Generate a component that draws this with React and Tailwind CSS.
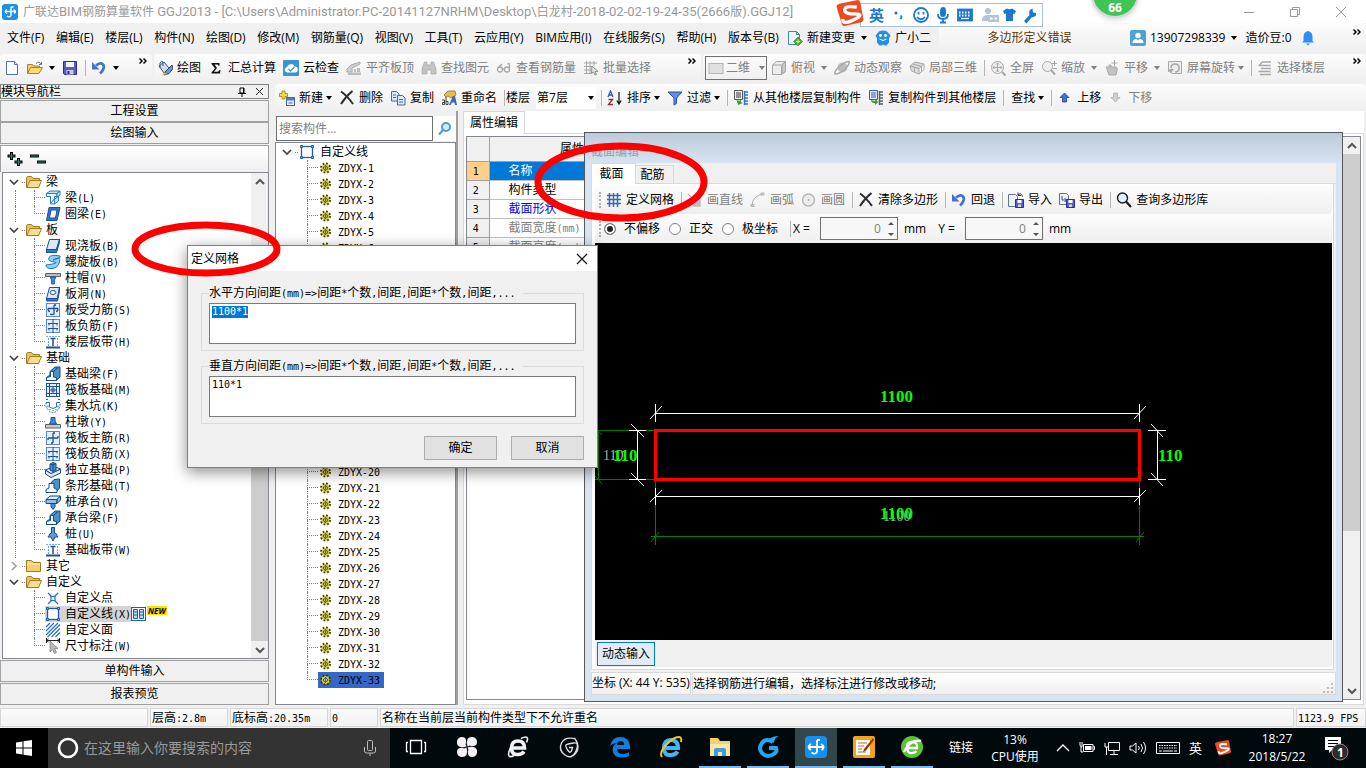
import React, { useEffect, useRef } from "react";

const BLUE = "#1d4f9e";

/* 16x16 drawings, keyed by name */
const ART = {
  app: (
    <>
      <rect width="16" height="16" rx="3" fill="#1e90e8" />
      <path d="M9 3v8.500q-1.500 2.500-4 .5M3 7.500h10M5 5.500q-3.500 2 0 4M11.500 5.500q3.500 2 .5 4M9 3h2.500" fill="none" stroke="#fff" strokeWidth="1.400" />
    </>
  ),
  newDoc: (
    <>
      <path d="M2.500 1.500h8l3 3v10h-11z" fill="#fdfeff" stroke="#5474a0" />
      <path d="M10.500 1.500v3h3" fill="#dbe6f5" stroke="#5474a0" />
    </>
  ),
  open: (
    <>
      <path d="M.5 13.500v-9h5l1 1.500h6v2" fill="#f3cf6e" stroke="#a9802c" />
      <path d="M.5 13.500l3-6h12l-3.500 6z" fill="#fbd976" stroke="#a9802c" />
      <path d="M9 3.500q3-3 5 .5m.5-2v2.500h-2.500" fill="none" stroke="#5d7594" />
    </>
  ),
  save: (
    <>
      <path d="M1.500 1.500h13v13h-12l-1-1z" fill="#5a5cc4" stroke="#2d2f80" />
      <path d="M4 2h8v5h-8z" fill="#f3f5ff" />
      <path d="M4.500 10h7v4.500h-7z" fill="#c7cbe8" />
      <path d="M5.500 11h2v3h-2z" fill="#2d2f80" />
    </>
  ),
  undo: (
    <>
      <path d="M5 5.500q5-4 7.500-.5 1.500 4-3.500 8.500" fill="none" stroke="#4373cc" strokeWidth="2.800" />
      <path d="M1 2v7.500h7.500z" fill="#4373cc" />
    </>
  ),
  paint: (
    <>
      <path d="M2 6l5-4 5 6-5 5z" fill="#cfdcec" stroke="#3d5878" />
      <path d="M3 8V3q1.500-3 3-1v4" fill="none" stroke="#3d5878" />
      <path d="M15 5l-6 6-2 4 5-1.500 4-5z" fill="#6a95d0" stroke="#26466f" />
      <path d="M7 12l-1.500 3.500L10 14z" fill="#e0b13a" />
    </>
  ),
  sigma: <path d="M3.500 3h8v2.700h-1q0-1.200-1.800-1.200H6.500L9 8l-3 3.700h3.300q1.700 0 2.200-1.700h1L12 13.500H3.500v-1L7 8.300 3.500 4z" fill="#111" />,
  cloud: (
    <>
      <rect width="16" height="16" rx="1" fill="#3a93d2" />
      <path d="M4 12.500a2.800 2.800 0 0 1 0-5.500 4 4 0 0 1 7.500-.5 3 3 0 0 1 .5 6z" fill="#fff" />
      <path d="M5.500 9l2 2 4-4" fill="none" stroke="#3a93d2" strokeWidth="1.300" />
    </>
  ),
  align: (
    <>
      <path d="M1 9l4-4 9-3v2L6 8v4H1z" fill="#d2d2d2" stroke="#a8a8a8" />
      <path d="M2 12.500h13v2.500H2zM8 9h2v3H8zM11 8h3v4h-3z" fill="#bcbcbc" />
    </>
  ),
  binoc: <path d="M3.500 2h2.500v3h4V2h2.500l2.500 7v5h-5v-4H6v4H1V9z" fill="#c4c4c4" stroke="#a0a0a0" strokeWidth=".6" />,
  glasses: (
    <g fill="none" stroke="#a8a8a8" strokeWidth="1.300">
      <circle cx="4" cy="9.500" r="2.500" />
      <circle cx="11" cy="9.500" r="2.500" />
      <path d="M6.500 9h2M2 8l4-4M13.500 9V4l-2-.5" />
    </g>
  ),
  batch: (
    <>
      <path d="M1 3h13M1 6.500h9M1 10h7M1 13.500h7M3.500 1v13M7 1v13M11 1v5" stroke="#a5a5a5" fill="none" />
      <path d="M9 6l6 5.500h-3l1.500 3-1.500.5-1.500-3-2 1.500z" fill="#e4e4e4" stroke="#8d8d8d" />
    </>
  ),
  flat: <rect x="1" y="3.500" width="14" height="10" fill="#e0e0e0" stroke="#b5b5b5" />,
  cube: (
    <g stroke="#a5a5a5" fill="#ececec">
      <path d="M1.500 5l4-3.500h9v10l-4 3h-9z" />
      <path d="M1.500 5h9v9.500M10.500 5l4-3.500" fill="none" />
      <path d="M11 5l3.500-3v9L11 14z" fill="#c9c9c9" />
    </g>
  ),
  orbit: (
    <>
      <ellipse cx="8.500" cy="7.500" rx="5" ry="5" fill="#bdbdbd" />
      <path d="M1 14q-1-3 5-8T15 1.500q1 2.500-4 7.500t-10 5z" fill="none" stroke="#a8a8a8" strokeWidth="1.500" />
    </>
  ),
  local3d: (
    <g fill="#dcdcdc" stroke="#a8a8a8">
      <path d="M1 6l5-4 9 2-5 4.500z" />
      <path d="M1 6l9 2.500V14L2.500 11z" />
      <path d="M15 4v5.500L10 14M5.500 7.500V12M3.500 4l9 2.300V12" fill="none" />
    </g>
  ),
  full: (
    <g fill="none" stroke="#a8a8a8">
      <circle cx="7.500" cy="7.500" r="6" fill="#efefef" />
      <path d="M7.500 3v9M3 7.500h9M6 4.500l1.500-1.500L9 4.500M6 10.500L7.500 12 9 10.500M4.500 6L3 7.500 4.500 9M10.500 6L12 7.500 10.500 9" />
      <path d="M12 12l3.500 3.500" strokeWidth="2" />
    </g>
  ),
  zoom: (
    <g fill="none" stroke="#a8a8a8">
      <circle cx="6.500" cy="6.500" r="5" fill="#efefef" />
      <path d="M10 10l4 4.500" strokeWidth="2" />
      <path d="M11 3.500h5M13.500 1v5M12 8.500h4" />
    </g>
  ),
  pan: (
    <g stroke="#a8a8a8" fill="none">
      <path d="M3 9q-2-3 1-2l1 1V5h2v2h5q2 1 1 4l-1 4H5z" fill="#c3c3c3" />
      <path d="M10.500 0v6M7.500 3h6" />
    </g>
  ),
  rotate: (
    <g fill="none" stroke="#a8a8a8">
      <path d="M1.500 12V1.500h13v12H5" fill="#ededed" />
      <path d="M4 8q0-4 4-4t4 4-4 4" strokeWidth="1.600" />
      <path d="M2 10l4-1-2 4z" fill="#a8a8a8" />
    </g>
  ),
  floors: <path d="M5 2h9M1.500 5.500h12M4 8.500h10M1.500 11.500h12M3 14.500h11M2 6l3-4" stroke="#a8a8a8" strokeWidth="1.400" fill="none" />,
  create: (
    <>
      <path d="M3 1h3v2.500h2.500v3H6V9H3V6.500H.5v-3H3z" fill="#f2d64b" stroke="#9c8014" strokeWidth=".8" />
      <rect x="7.500" y="7.500" width="8" height="8" fill="#e3edfb" stroke="#4568a6" />
      <path d="M8 8h7v2.500H8z" fill="#4f7dd0" />
      <path d="M9.500 13h4" stroke="#4568a6" />
    </>
  ),
  del: <path d="M2 1.500q6 4 12 12.500M13.500 1Q7 6 2 14" fill="none" stroke="#2c2c2c" strokeWidth="2" />,
  copy: (
    <g fill="#dbe8fb" stroke="#4568a6">
      <path d="M1.500 1.500h5l2.500 2.500v7H1.500z" />
      <path d="M7.500 5.500h5l2.500 2.500v7H7.500z" />
      <path d="M3 5h3M3 7.500h3M9 9.500h4M9 12h4" />
    </g>
  ),
  rename: (
    <>
      <path d="M3 5l4-4h7l1 4-5 3-3-2-2 1z" fill="#e4bd4c" stroke="#7d6220" strokeWidth=".7" />
      <path d="M8 15l4-9h2l2 9h-2l-.5-2.500h-2.500L9.500 15z" fill="#3a66b8" />
      <path d="M1 10h2.500v4.500H1.500v-2h2M5 7v7.500h2v-3H5" fill="none" stroke="#333" strokeWidth=".9" />
    </>
  ),
  sort: (
    <>
      <path d="M1 7l2.500-6L6 7M2 5h3" fill="none" stroke="#3357b0" strokeWidth="1.300" />
      <path d="M1.500 9.500h4l-4 5h4.500" fill="none" stroke="#a02828" strokeWidth="1.300" />
      <path d="M12 2v11M9.800 10.500L12 14l2.200-3.500" fill="none" stroke="#111" strokeWidth="1.200" />
    </>
  ),
  filter: <path d="M1 2h14l-5.500 6v5.500L7 15V8z" fill="#5c8fe6" stroke="#274f9c" />,
  copyFrom: (
    <>
      <path d="M1.500 .5h8v9h-8z" fill="#f2f2f2" stroke="#555" />
      <path d="M3 3h5M3 5h5M3 7h5" stroke="#333" />
      <path d="M12 2h3M12 5h3M12 8h3M12 11h3M12 14h3M11.500 1v14" stroke="#3b70c4" strokeWidth="1.500" />
      <path d="M5 15l4-1.500-1.500-4-1 1.500-3-1 1 3z" fill="#3a9e3a" />
    </>
  ),
  copyTo: (
    <>
      <path d="M1.500 .5h8v9h-8z" fill="#dfe9fa" stroke="#3a5ea8" />
      <path d="M3 3h5M3 5h5M3 7h5" stroke="#3a5ea8" />
      <path d="M12 2h3M12 5h3M12 8h3M12 11h3M12 14h3M11.500 1v14" stroke="#55606e" strokeWidth="1.500" />
      <path d="M3 9.500q0 4 4 3.500v2l3.500-3L7 9v2q-2 0-4-1.500z" fill="#3a9e3a" />
    </>
  ),
  up: <path d="M7.500 3l4.500 4.500H9.500v4.500h-4V7.500H3z" fill="#3f72d8" stroke="#1d439c" strokeWidth=".8" />,
  down: <path d="M7.500 12L12 7.500H9.500V3h-4v4.500H3z" fill="#cfcfcf" stroke="#b0b0b0" strokeWidth=".8" />,
  change: (
    <>
      <path d="M1.500 1.500h8l3 3v10h-11z" fill="#eef6fd" stroke="#3f86b8" />
      <path d="M9.500 1.500v3h3" fill="none" stroke="#3f86b8" />
      <path d="M11 7l4.500 4.500L11 16l-4.500-4.500z" fill="#55a82c" stroke="#2d7d12" strokeWidth=".6" />
      <path d="M11 9.500v4M9 11.500h4" stroke="#d8f5c8" />
    </>
  ),
  mascot: (
    <>
      <path d="M4 1.500q4-2 8 0l3.500 4-1.500 3v4l-2.500 3H9.500L8 14.500 6.500 15.500h-2L2 12.500v-4l-1.500-3z" fill="#2490e0" />
      <circle cx="5.500" cy="5.500" r="1.400" fill="#fff" />
      <circle cx="10.500" cy="5.500" r="1.400" fill="#fff" />
      <path d="M4.500 9q3.500 3 7 0" stroke="#fff" fill="none" />
    </>
  ),
  user: (
    <>
      <rect width="16" height="16" rx="2" fill="#4aa3d6" />
      <circle cx="8" cy="5.500" r="2.700" fill="#fff" />
      <path d="M2.500 13q0-4 4-4L8 10.500 9.500 9q4 0 4 4z" fill="#fff" />
    </>
  ),
  bell: <path d="M8 1q-4.500 1-4.500 6v4L2 12.500h12L12.500 11V7q0-5-4.500-6zM6 13.500h4L8 15.500z" fill="#2f8df5" />,
  grid: <path d="M3.500 1v14M7.500 1v14M11.500 1v14M1 3.500h14M1 7.500h14M1 11.500h14" stroke="#3968b8" strokeWidth="1.500" fill="none" />,
  line: <path d="M1 2l10 10M13 6v8H6z" stroke="#b0b0b0" strokeWidth="1.200" fill="#c8c8c8" />,
  arc: <path d="M2 14Q2 4 13 2M1 12.500h3v2H1zM11 1h3v2h-3z" stroke="#b0b0b0" fill="none" />,
  circle: (
    <>
      <circle cx="7.500" cy="8" r="6" fill="#ececec" stroke="#b5b5b5" strokeWidth="1.400" />
      <circle cx="7.500" cy="8" r="1" fill="#aaa" />
    </>
  ),
  importIcon: (
    <>
      <path d="M.5 2.500h7l2 2v10h-9z" fill="#edf2fb" stroke="#5d7594" />
      <path d="M7.500 7.500h8v8h-8z" fill="#5a5cc4" stroke="#2d2f80" />
      <path d="M9.500 8h4v3h-4z" fill="#fff" />
      <path d="M10 12.500h3V15h-3z" fill="#d5d8f0" />
      <path d="M10 3q3-3 4.500 1.500M10 .5V3.500h3" stroke="#333" fill="none" />
    </>
  ),
  exportIcon: (
    <>
      <path d="M.5 1.500h7l2 2v9h-9z" fill="#edf2fb" stroke="#5d7594" />
      <path d="M7.500 7.500h8v8h-8z" fill="#5a5cc4" stroke="#2d2f80" />
      <path d="M9.500 8h4v3h-4z" fill="#fff" />
      <path d="M10 12.500h3V15h-3z" fill="#d5d8f0" />
      <path d="M3 4v4h4M5.500 6l2 2-2 2" stroke="#2b4f96" fill="none" />
    </>
  ),
  query: (
    <>
      <circle cx="6.500" cy="6" r="5" fill="#dff1fc" stroke="#1c1c1c" strokeWidth="1.400" />
      <path d="M10 9.500l5 5.500" stroke="#1c1c1c" strokeWidth="2.200" />
    </>
  ),
  folderOpen: (
    <>
      <path d="M.5 13.500V3.500l1-1h4l1.500 2h6.500v3" fill="#e9c25b" stroke="#a07a26" />
      <path d="M.8 13.500L4 6.500h11.500L12.500 13.500z" fill="#fbdf8e" stroke="#a07a26" />
    </>
  ),
  folder: (
    <>
      <path d="M.5 13.500V2.500h5l1.500 2h7.500v9z" fill="#f3cf6e" stroke="#a07a26" />
      <path d="M1 6h13" stroke="#fff1c4" />
    </>
  ),
  beam: (
    <g stroke="#2a7fb8" fill="#bfe3f7">
      <path d="M1.500 3.500L5 1h10l-3 2.500z" />
      <path d="M1.500 3.500H12v3H9.500V14h-4V6.500h-4z" fill="#e9f6fd" />
      <path d="M12 3.500L15 1v4l-3 2zM9.500 14l4-3V6.500L9.500 9zM6 13l4-5" />
    </g>
  ),
  ringBeam: (
    <g stroke={BLUE}>
      <path d="M4 1.500h11l-3 13H1.500z" fill="#3b6fd0" />
      <path d="M6 4h6l-1.500 8H4.500z" fill="#fff" />
    </g>
  ),
  slab: (
    <g stroke={BLUE}>
      <path d="M4.500 1.500h10l-3 10H1.500z" fill="#dbe9ff" />
      <path d="M1.500 11.500h10l3-10v3l-3 10H1.500z" fill="#3b6fd0" />
    </g>
  ),
  spiral: <path d="M15 2Q6 0 4 3.500T9 8t-8 3q0 4 6 3.500T14.500 8 10 5t5-1.500z" fill="#8fd0f5" stroke="#2077b5" />,
  cap: (
    <>
      <path d="M.5 3.500h15v3H.5z" fill="#b9bdc2" stroke="#5b6269" />
      <path d="M5 7h6l-1.500 3V14h-3v-4z" fill="#4585e0" stroke={BLUE} strokeWidth=".8" />
    </>
  ),
  hole: (
    <g stroke={BLUE}>
      <path d="M4.500 1.500h10l-2 11H1.500z" fill="#dbe9ff" />
      <path d="M1.500 12.500h11l2-11v3l-2 10.500H1.500z" fill="#3b6fd0" />
      <ellipse cx="8" cy="6.500" rx="2.800" ry="2" fill="#fff" />
    </g>
  ),
  rebarA: (
    <g stroke={BLUE} fill="none">
      <rect x="1.500" y="1.500" width="13" height="13" fill="#e6efff" stroke="#5c86cf" />
      <path d="M3 6.500h10M3 6.500q0 3 2 3M13 6.500q0 3-2 3M9 3v9q-2 1-4 0M9 3h2" strokeWidth="1.300" />
    </g>
  ),
  rebarB: (
    <g stroke={BLUE} fill="none">
      <rect x="1.500" y="1.500" width="13" height="13" fill="#e6efff" stroke="#5c86cf" />
      <path d="M3 5.500h10M3 10.500h10M8 1v14M4 5.500v2M12 5.500v2M4 10.500v2M12 10.500v2" />
    </g>
  ),
  strip: (
    <>
      <path d="M1 2.500h14" stroke="#7ba4e6" strokeDasharray="2 1" />
      <path d="M1 13.500h14" stroke={BLUE} strokeWidth="2" />
      <path d="M3.500 4v8M12.500 4v8" stroke="#7ba4e6" strokeDasharray="2 1" />
      <path d="M5.500 4.500h5M8 4v8" stroke={BLUE} strokeWidth="1.500" />
    </>
  ),
  footBeam: (
    <g stroke="#174a86">
      <path d="M5 5.500L10 1h5v10l-4 3.500H1.500v-3L5 9z" fill="#4a90cf" />
      <path d="M5.500 5.500h3V11l3 .5v3h-10v-3l4-1z" fill="#f2f8fe" />
      <path d="M8.500 5.500L13 1.500" fill="none" />
    </g>
  ),
  raft: (
    <g stroke={BLUE} fill="none">
      <rect x="1.500" y="1.500" width="13" height="13" fill="#e6efff" />
      <path d="M4.500 1v14M11.500 1v14M1 4.500h14M1 11.500h14M7 6h2v4H7zM5 8h6" />
    </g>
  ),
  sump: (
    <g stroke="#2c6cc4" fill="none">
      <path d="M1 4.500h3.500V9q3.500 3 7 0V4.500H15" />
      <path d="M1 4.500v4q3 6 7 6t7-6v-4M3 7.500v2M5 11v1M8 12v1M11 11v1M13 7.500v2M1 1.500h2M13 1.500h2" strokeDasharray="2 1" />
    </g>
  ),
  pier: (
    <>
      <path d="M.5 10.500h15v3.500H.5z" fill="#c6cacf" stroke="#5b6269" />
      <path d="M4.500 10L6 7V3.500h4V7l1.500 3z" fill="#4585e0" stroke={BLUE} />
    </>
  ),
  rebarC: (
    <g stroke={BLUE} fill="none">
      <rect x="1.500" y="1.500" width="13" height="13" fill="#e6efff" stroke="#5c86cf" />
      <path d="M3 8h10M8 3v10M3 8v2M13 8V6M8 3h2M8 13H6" strokeWidth="1.300" />
    </g>
  ),
  isolated: (
    <g stroke="#174a86" fill="#d9ecfb">
      <path d="M.5 8L6 11.500 15.500 7v4L6 15.500.5 12z" />
      <path d="M.5 8L9 4.500 15.500 7 6 11.500z" />
      <path d="M5 8V2l3-1.500 3 1V8L8 9.500z" fill="#4a90cf" />
      <path d="M5 2l3 1 3-1.500M8 3v6" fill="none" />
    </g>
  ),
  stripFoot: (
    <g stroke="#174a86" fill="#4a90cf">
      <path d="M5 6l4-4.500 5.500-.5v9l-4 4.500z" />
      <path d="M1 14.500v-3l3-1.500V5.500h5V10l3 1.500v3z" fill="#f2f8fe" />
    </g>
  ),
  pileCap: (
    <g stroke="#174a86" fill="#d9ecfb">
      <path d="M1 5.500L5 2h10.500L12 5.500z" />
      <path d="M1 5.500h11v4H1zM12 5.500L15.500 2v4L12 9.500z" fill="#8fbfe6" />
      <path d="M6 9.500h4V13l-2 2.500L6 13z" fill="#4a90cf" />
    </g>
  ),
  pile: <path d="M6.500 1.500h3V7q2.500.5 2.500 2.500l1 1.500H10l-2 4-2-4H3l1-1.500Q4 7.500 6.500 7z" fill="#5b9bd5" stroke="#174a86" />,
  cross: (
    <g stroke="#2470c8" fill="none" strokeWidth="1.200">
      <path d="M3 3l3.500 3.500M13 3L9.500 6.500M3 14l3.500-3.500M13 14l-3.500-3.500" />
      <rect x="6" y="6.500" width="4" height="4" />
    </g>
  ),
  poly: (
    <g stroke="#1f5bb5" fill="#fff">
      <rect x="2.500" y="2.500" width="11" height="11" strokeWidth="1.300" />
      <path d="M1.500 1.500h2v2h-2zM12.500 1.500h2v2h-2zM1.500 12.500h2v2h-2zM12.500 12.500h2v2h-2z" fill="#8ab4ee" />
    </g>
  ),
  hatch: <path d="M1 5l4-4M1 9l8-8M1 13l12-12M2.500 15L15 2.500M6.500 15L15 6.500M10.500 15l4.500-4.500" stroke="#2470c8" strokeWidth="1.200" fill="none" />,
  dim: (
    <>
      <path d="M1.500 0v5M14.500 0v5M1 2.500h14M3.500 1L1.500 2.500l2 1.500M12.500 1l2 1.500-2 1.500" stroke="#222" fill="none" />
      <path d="M5 3l8 7.500H9.500l2 4-2 1-2-4L5 14z" fill="#b8b8b8" stroke="#777" strokeWidth=".7" />
    </>
  ),
  gear: (
    <>
      <circle cx="7.500" cy="8" r="4" fill="#e4da20" />
      <circle cx="7.500" cy="8" r="4.600" fill="none" stroke="#3a3800" strokeWidth="1.800" strokeDasharray="1.810 1.800" />
      <circle cx="7.500" cy="8" r="2" fill="#fff" stroke="#3a3800" strokeWidth=".8" />
      <path d="M7.500 5v6M4.500 8h6" stroke="#3a3800" strokeWidth=".6" />
    </>
  ),
  columns: (
    <g stroke="#1f5bb5" fill="#b8dcfa">
      <rect x=".5" y="1.500" width="14" height="13" fill="#fff" />
      <path d="M2.500 3.500h4v9h-4zM8.500 3.500h4v9h-4zM2.500 6h4M2.500 9h4M8.500 6h4M8.500 9h4" />
    </g>
  ),
};

function Icon({ n }) {
  return (
    <svg width="16" height="16" viewBox="0 0 16 16" className="shrink-0" aria-hidden="true">
      {ART[n]}
    </svg>
  );
}

const CJK = "font-['Open_Sans','Noto_Sans_CJK_SC',sans-serif]";

function Split({ text, latin }) {
  const parts = String(text).match(/[\x00-\x7f]+|[^\x00-\x7f]+/g) || [];
  return (
    <span className="whitespace-pre">
      {parts.map((p, i) => (p.charCodeAt(0) < 128 ? <span key={i} className={latin}>{p}</span> : p))}
    </span>
  );
}

/* Half-width characters take exactly half the width of a full-width one. */
function Mono({ children }) {
  return <Split text={children} latin="font-['DejaVu_Sans_Mono',monospace] text-[10px] leading-3" />;
}

function Caret({ wide }) {
  return (
    <svg width="6" height="4" viewBox="0 0 6 4" className={wide ? "ml-[6px] shrink-0" : "ml-[3px] shrink-0"} aria-hidden="true">
      <path d="M0 0h6L3 4z" fill="currentColor" />
    </svg>
  );
}

function Tool({ icon, label, caret, wide, disabled }) {
  return (
    <button className={"flex h-full shrink-0 items-center pr-[7px] " + (disabled ? "text-[#808080]" : "text-black")}>
      {icon && <Icon n={icon} />}
      {label && <span className={icon ? "ml-1" : "ml-[2px]"}>{label}</span>}
      {caret && <Caret wide={wide} />}
    </button>
  );
}

function Sep() {
  return <span className="mr-[5px] h-4 w-px shrink-0 bg-[#b5b5b5]" />;
}

function More() {
  return (
    <button aria-label="更多" className="flex px-[5px] py-1">
      <svg width="8" height="6"><path d="M.5 .5L3 3 .5 5.500M4.500 .5L7 3 4.500 5.500" fill="none" stroke="#000" strokeWidth="1.500" /></svg>
    </button>
  );
}

const BAR = "flex items-center rounded bg-gradient-to-b from-[#fcfcfc] to-[#efefef]";

function TitleBar() {
  return (
    <header className="flex h-[23px] shrink-0 items-center bg-white pl-[2px] text-[#999]">
      <Icon n="app" />
      <h1 className="ml-[5px] flex-1 whitespace-nowrap">
        <Split
          latin="font-['Roboto','Open_Sans',sans-serif] text-[13px]"
          text={"广联达BIM钢筋算量软件 GGJ2013 - [C:\\Users\\Administrator.PC-20141127NRHM\\Desktop\\白龙村-2018-02-02-19-24-35(2666版).GGJ12]"}
        />
      </h1>
      <div className="flex items-center gap-[34px] pr-[19px]">
        <button aria-label="最小化"><svg width="12" height="12"><path d="M1 6.500h10" stroke="#999" /></svg></button>
        <button aria-label="还原"><svg width="12" height="12"><path d="M1.500 3.500h7v7h-7zM3.500 3.500v-2h7v7h-2" fill="none" stroke="#999" /></svg></button>
        <button aria-label="关闭"><svg width="12" height="12"><path d="M1 1l10 10M11 1L1 11" fill="none" stroke="#999" /></svg></button>
      </div>
    </header>
  );
}

const MENUS = ["文件(F)", "编辑(E)", "楼层(L)", "构件(N)", "绘图(D)", "修改(M)", "钢筋量(Q)", "视图(V)", "工具(T)", "云应用(Y)", "BIM应用(I)", "在线服务(S)", "帮助(H)", "版本号(B)"];

function MenuBar() {
  return (
    <nav className="flex h-[30px] shrink-0 items-center">
      <div className="flex w-[779px] shrink-0 justify-between pl-[7px]">
        {MENUS.map((m) => <button key={m} className="whitespace-nowrap">{m}</button>)}
      </div>
      <button className="ml-2 flex shrink-0 items-center"><Icon n="change" /><span className="ml-1">新建变更</span><Caret wide /></button>
      <button className="ml-2 flex shrink-0 items-center"><Icon n="mascot" /><span className="ml-1">广小二</span></button>
      <div className={BAR + " ml-2 h-full flex-1 justify-center pr-[6px] text-[#663300]"}>多边形定义错误</div>
      <div className={BAR + " h-full w-[240px] shrink-0 pl-1"}>
        <Icon n="user" /><span className="ml-1">13907298339</span><Caret wide />
        <span className="ml-2 mr-2">造价豆:0</span>
        <button aria-label="通知" className="flex"><Icon n="bell" /></button>
        <span className="flex flex-1 justify-end self-start pt-[2px]"><More /></span>
      </div>
    </nav>
  );
}

function MainToolbar() {
  return (
    <div className="flex h-[30px] shrink-0 gap-[2px] py-px">
      <div className={BAR + " w-[152px] pl-1"}>
        <Tool icon="newDoc" />
        <Tool icon="open" caret wide />
        <Tool icon="save" />
        <Sep />
        <Tool icon="undo" caret wide />
        <span className="flex flex-1 justify-end self-start"><More /></span>
      </div>
      <div className={BAR + " w-[547px] pl-[3px]"}>
        <Tool icon="paint" label="绘图" />
        <Tool icon="sigma" label="汇总计算" />
        <Tool icon="cloud" label="云检查" />
        <Tool icon="align" label="平齐板顶" disabled />
        <Tool icon="binoc" label="查找图元" disabled />
        <Tool icon="glasses" label="查看钢筋量" disabled />
        <Tool icon="batch" label="批量选择" disabled />
        <span className="flex flex-1 justify-end self-start"><More /></span>
      </div>
      <div className={BAR + " flex-1 pl-[2px] text-[#808080]"}>
        <div className="mr-1 flex h-6 w-[62px] shrink-0 items-center border border-[#707070] pl-[2px]">
          <Icon n="flat" />
          <select aria-label="视图模式" className="ml-[2px] w-[27px] appearance-none bg-transparent"><option>二维</option></select>
          <Caret wide />
        </div>
        <Tool icon="cube" label="俯视" caret wide disabled />
        <Tool icon="orbit" label="动态观察" disabled />
        <Tool icon="local3d" label="局部三维" disabled />
        <Sep />
        <Tool icon="full" label="全屏" disabled />
        <Tool icon="zoom" label="缩放" caret wide disabled />
        <Tool icon="pan" label="平移" caret wide disabled />
        <Tool icon="rotate" label="屏幕旋转" caret disabled />
        <Sep />
        <Tool icon="floors" label="选择楼层" disabled />
        <span className="flex flex-1 justify-end self-start"><More /></span>
      </div>
    </div>
  );
}

const TREE = [
  { name: "梁", open: true, items: [["beam", "梁(L)"], ["ringBeam", "圈梁(E)"]] },
  { name: "板", open: true, items: [["slab", "现浇板(B)"], ["spiral", "螺旋板(B)"], ["cap", "柱帽(V)"], ["hole", "板洞(N)"], ["rebarA", "板受力筋(S)"], ["rebarB", "板负筋(F)"], ["strip", "楼层板带(H)"]] },
  { name: "基础", open: true, items: [["footBeam", "基础梁(F)"], ["raft", "筏板基础(M)"], ["sump", "集水坑(K)"], ["pier", "柱墩(Y)"], ["rebarC", "筏板主筋(R)"], ["rebarB", "筏板负筋(X)"], ["isolated", "独立基础(P)"], ["stripFoot", "条形基础(T)"], ["pileCap", "桩承台(V)"], ["footBeam", "承台梁(F)"], ["pile", "桩(U)"], ["strip", "基础板带(W)"]] },
  { name: "其它", open: false, items: [] },
  { name: "自定义", open: true, items: [["cross", "自定义点"], ["poly", "自定义线(X)"], ["hatch", "自定义面"], ["dim", "尺寸标注(W)"]] },
];

function Chevron({ open }) {
  return (
    <svg width="16" height="16" className="shrink-0" aria-hidden="true">
      {open ? <path d="M4 6l4 4 4-4" fill="none" stroke="#404040" strokeWidth="1.600" /> : <path d="M6 4l4 4-4 4" fill="none" stroke="#a0a0a0" strokeWidth="1.600" />}
    </svg>
  );
}

function Branch({ last }) {
  return (
    <span className="flex h-4 w-[11px] shrink-0 flex-col">
      <span className="h-2 border-b border-l border-dotted border-[#808080]" />
      {!last && <span className="h-2 border-l border-dotted border-[#808080]" />}
    </span>
  );
}

function ArrowBtn({ dir }) {
  return (
    <button aria-label={dir === "up" ? "向上滚动" : "向下滚动"} className="flex h-[17px] items-center justify-center">
      <svg width="10" height="8"><path d={dir === "up" ? "M1 6l4-4 4 4" : "M1 2l4 4 4-4"} fill="none" stroke="#555" strokeWidth="2" /></svg>
    </button>
  );
}

function NavPanel() {
  const section = "h-[22px] w-full shrink-0 border border-[#a0a0a0] bg-[#f0f0f0]";
  return (
    <aside className="flex w-[269px] shrink-0 flex-col pb-[2px] pt-px">
      <div className="mb-px flex h-[15px] shrink-0 items-center border border-[#808080] leading-3">
        <span className="flex-1">模块导航栏</span>
        <button aria-label="固定" className="mr-2"><svg width="10" height="10"><path d="M3 1h4v5H3zM6.500 1v5M1 6.500h8M5 7v3" fill="none" stroke="#000" /></svg></button>
        <button aria-label="关闭面板" className="mr-1"><svg width="9" height="9"><path d="M1 1l7 7M8 1L1 8" stroke="#222" /></svg></button>
      </div>
      <button className={section}>工程设置</button>
      <button className={section}>绘图输入</button>
      <div className="mt-px flex h-[27px] shrink-0 items-center gap-[6px] border-x border-t border-[#a0a0a0] bg-gradient-to-b from-white to-[#efefef] pl-[6px]">
        <button aria-label="全部展开"><svg width="17" height="16"><path d="M4.500 1v8M.5 5h8M11.500 7v8M7.500 11h8" stroke="#000" strokeWidth="3" /><path d="M4.500 2v6M1.500 5h6M11.500 8v6M8.500 11h6" stroke="#1f8a80" strokeWidth="1.200" /></svg></button>
        <button aria-label="全部折叠"><svg width="17" height="16"><path d="M0 5h9M7 11h9" stroke="#000" strokeWidth="3" /><path d="M1 5h7M8 11h7" stroke="#1f8a80" strokeWidth="1.200" /></svg></button>
      </div>
      <div className="ml-[2px] flex min-h-0 flex-1 border border-[#828790] bg-white">
        <ul className="flex-1 overflow-hidden pt-px leading-4">
          {TREE.map((g, gi) => (
            <li key={g.name}>
              <div className="flex h-4 items-center pl-[3px]">
                <Chevron open={g.open} />
                <span className="mr-px w-[3px] border-b border-dotted border-[#808080]" />
                <Icon n={g.open ? "folderOpen" : "folder"} />
                <span className="ml-1">{g.name}</span>
              </div>
              <ul>
                {g.items.map(([ic, t], i) => {
                  const active = t === "自定义线(X)";
                  return (
                    <li key={t} className="flex h-4 items-center pl-3">
                      <span className={"h-4 w-[19px] shrink-0 " + (gi < TREE.length - 1 ? "border-l border-dotted border-[#808080]" : "")} />
                      <Branch last={i === g.items.length - 1} />
                      <span className={"flex h-4 items-center " + (active ? "bg-[#d4d4d4]" : "")}>
                        <Icon n={ic} />
                        <span className="ml-1"><Mono>{t}</Mono></span>
                      </span>
                      {active && <Icon n="columns" />}
                      {active && <b className="self-start bg-[#ffe000] px-px text-[8px] italic leading-[9px]">NEW</b>}
                    </li>
                  );
                })}
              </ul>
            </li>
          ))}
        </ul>
        <div className="flex w-[17px] shrink-0 flex-col bg-[#f0f0f0]">
          <ArrowBtn dir="up" />
          <div className="min-h-0 flex-[1]" />
          <div className="min-h-0 flex-[3] bg-[#cdcdcd]" />
          <ArrowBtn dir="down" />
        </div>
      </div>
      <button className={section + " mt-px"}>单构件输入</button>
      <button className={section + " mt-px"}>报表预览</button>
    </aside>
  );
}

function ComponentToolbar() {
  return (
    <div className={BAR + " mt-px h-[27px] shrink-0 pl-1"}>
      <Tool icon="create" label="新建" caret />
      <Tool icon="del" label="删除" />
      <Tool icon="copy" label="复制" />
      <Tool icon="rename" label="重命名" />
      <span className="mr-px h-4 w-px bg-[#b5b5b5]" />
      <label htmlFor="floor">楼层</label>
      <div className="ml-[6px] mr-[5px] flex h-[22px] w-[60px] items-center bg-white pl-px">
        <select id="floor" className="w-12 appearance-none bg-transparent"><option>第7层</option></select>
        <Caret />
      </div>
      <Sep />
      <Tool icon="sort" label="排序" caret />
      <Tool icon="filter" label="过滤" caret />
      <Sep />
      <Tool icon="copyFrom" label="从其他楼层复制构件" />
      <Tool icon="copyTo" label="复制构件到其他楼层" />
      <Sep />
      <Tool label="查找" caret />
      <Sep />
      <Tool icon="up" label="上移" />
      <Tool icon="down" label="下移" disabled />
    </div>
  );
}

function ComponentList() {
  return (
    <section className="flex w-[183px] shrink-0 flex-col border-r-2 border-[#a0a0a0]">
      <div className="mb-px mt-[5px] flex h-[25px] shrink-0">
        <input aria-label="搜索构件" placeholder="搜索构件..." className="ml-px w-[157px] border border-[#707070] bg-white pl-[2px] outline-none placeholder:text-[#808080]" />
        <button aria-label="搜索" className="flex flex-1 items-center justify-center bg-white">
          <svg width="15" height="15"><circle cx="9" cy="6" r="4" fill="#d8ecfa" stroke="#4a9bdc" strokeWidth="2" /><path d="M6 9l-4 4.500" stroke="#4a9bdc" strokeWidth="2.200" /></svg>
        </button>
      </div>
      <ul className="min-h-0 flex-1 overflow-hidden border border-[#828790] bg-white pt-px leading-4">
        <li className="flex h-4 items-center pl-[3px]">
          <Chevron open />
          <span className="mr-px w-[3px] border-b border-dotted border-[#808080]" />
          <Icon n="poly" />
          <span className="ml-[5px]">自定义线</span>
        </li>
        {Array.from({ length: 33 }, (_, i) => (
          <li key={i} className="flex h-4 items-center pl-[31px]">
            <Branch last={i === 32} />
            <span className={"flex h-4 items-center pr-1 " + (i === 32 ? "bg-[#3367c8]" : "")}>
              <Icon n="gear" />
              <span className="ml-1"><Mono>{`ZDYX-${i + 1}`}</Mono></span>
            </span>
          </li>
        ))}
      </ul>
    </section>
  );
}

const PROPS = [
  ["名称", "bg-[#0078d7] text-white"],
  ["构件类型", "text-black"],
  ["截面形状", "text-[#0000ff]"],
  ["截面宽度(mm)", "text-[#808080]"],
  ["截面高度(mm)", "text-[#808080]"],
];

function PropertyPane() {
  return (
    <section className="ml-[5px] flex flex-1 flex-col pr-[2px]">
      <div className="flex h-[23px] shrink-0">
        <button className="w-[62px] border border-b-0 border-[#d9d9d9] bg-white">属性编辑</button>
        <span className="flex-1 border-b border-[#d9d9d9] bg-white" />
      </div>
      <div className="flex min-h-0 flex-1 border border-t-0 border-[#d9d9d9] bg-white px-[2px] pb-1 pt-[2px]">
        <div className="flex flex-1 justify-between border border-[#828790]">
          <table className="h-min border-collapse">
            <thead>
              <tr className="h-6">
                <th className="w-[22px] border border-l-0 border-t-0 border-[#a0a0a0] bg-[#f0f0f0]" />
                <th className="w-[190px] border border-t-0 border-[#a0a0a0] bg-[#f0f0f0] font-normal">属性名称</th>
              </tr>
            </thead>
            <tbody>
              {PROPS.map(([t, c], i) => (
                <tr key={t} className="h-[19px] leading-4">
                  <td className={"border border-l-0 border-[#a0a0a0] p-0 pr-1 text-center " + (i === 0 ? "bg-[#ffd08a]" : "bg-[#f0f0f0]")}><Mono>{i + 1}</Mono></td>
                  <td className={"border border-[#c0c0c0] p-0 pl-[19px] " + c}><Mono>{t}</Mono></td>
                </tr>
              ))}
            </tbody>
          </table>
          <div className="flex w-[17px] flex-col bg-[#f0f0f0]">
            <ArrowBtn dir="up" />
            <div className="flex-[5] bg-[#cdcdcd]" />
            <div className="flex-[2]" />
            <ArrowBtn dir="down" />
          </div>
        </div>
      </div>
    </section>
  );
}

function Spin({ label }) {
  return (
    <label className="flex items-center">
      <span className="whitespace-pre">{label} =</span>
      <span className="ml-[10px] mr-[6px] flex h-[23px] w-[78px] items-center border border-[#707070] bg-[#f7f7f7]">
        <input defaultValue="0" className="w-[60px] bg-transparent text-right text-[#808080] outline-none" />
        <svg width="6" height="16" className="ml-[7px]" aria-hidden="true"><path d="M0 4l3-3 3 3zM0 12l3 3 3-3z" fill="#555" /></svg>
      </span>
      mm
    </label>
  );
}

function Grip() {
  return <span className="h-4 w-[3px] shrink-0 border-l-2 border-dotted border-[#b0b0b0]" />;
}

function Drawing() {
  return (
    <svg className="block h-full w-full" aria-label="截面图形">
      <g transform="translate(-595 -243)" fill="none">
        <g stroke="#008000">
          <path d="M595 430.500h60M595 479.500h60M598.500 430v50M595 427l7 8M595 476l7 8" />
          <path d="M655.500 480v65M1139.500 480v65M651 536.500h493M651 542l8-10M1136 542l8-10" />
        </g>
        <g fill="#b4b4b4" className="font-['Liberation_Serif',serif] text-[14px]">
          <text x="603" y="460">110</text>
          <text x="883" y="521">1100</text>
        </g>
        <g stroke="#fff">
          <path d="M655 413.500h485M655.500 404v18M1139.500 404v18M650 419l12-13M1134 419l12-13" />
          <path d="M655 496.500h485M655.500 488v17M1139.500 488v17M650 502l12-12M1134 502l12-12" />
          <path d="M637.500 430v50M629 430.500h17M629 479.500h17M631 424l13 13M631 473l13 13" />
          <path d="M1157.500 430v50M1148 430.500h18M1148 479.500h18M1151 424l12 13M1151 473l12 13" />
        </g>
        <rect x="655.500" y="430.500" width="484" height="49" stroke="#ff0000" strokeWidth="3" />
        <g fill="#00ff00" className="font-['Liberation_Serif',serif] text-[17px] font-bold">
          <text x="880" y="402">1100</text>
          <text x="880" y="519">1100</text>
          <text x="613" y="461">110</text>
          <text x="1158" y="461">110</text>
        </g>
      </g>
    </svg>
  );
}

function SectionWindow() {
  return (
    <section className="absolute bottom-[66px] left-[584px] right-[23px] top-[132px] flex flex-col border border-[#55595e] bg-[#d9e4f1] px-[6px] pb-[6px]">
      <h2 className="-mx-[6px] flex h-[30px] shrink-0 items-end bg-gradient-to-b from-[#bccbdb] to-[#d7e3f1] pb-[3px] pl-[6px] text-[#9aa3ad]">截面编辑</h2>
      <div className="flex min-h-0 flex-1 flex-col bg-[#f0f0f0]">
        <div className="flex h-[21px] shrink-0 items-end">
          <button className="h-[21px] w-[45px] border border-b-0 border-[#d9d9d9] bg-white pr-1">截面</button>
          <button className="h-[19px] w-[38px] border border-l-0 border-[#d9d9d9] pr-1">配筋</button>
          <span className="flex-1 self-stretch border-b border-[#d9d9d9]" />
        </div>
        <div className="mr-[2px] flex min-h-0 flex-1 flex-col border border-t-0 border-[#d9d9d9] bg-white p-[3px] pb-[2px] pr-px pt-[2px]">
          <div className={BAR + " h-7 shrink-0 overflow-hidden pl-1"}>
            <Grip />
            <span className="w-1" />
            <Tool icon="grid" label="定义网格" />
            <Sep />
            <Tool icon="line" label="画直线" disabled />
            <Tool icon="arc" label="画弧" disabled />
            <Tool icon="circle" label="画圆" disabled />
            <Sep />
            <Tool icon="del" label="清除多边形" />
            <Sep />
            <Tool icon="undo" label="回退" />
            <Sep />
            <Tool icon="importIcon" label="导入" />
            <Tool icon="exportIcon" label="导出" />
            <Sep />
            <Tool icon="query" label="查询多边形库" />
          </div>
          <div className={BAR + " h-[29px] shrink-0 overflow-hidden pl-1"}>
            <Grip />
            <span className="w-[2px]" />
            {["不偏移", "正交", "极坐标"].map((t, i) => (
              <label key={t} className="mr-[9px] flex items-center gap-2">
                <input type="radio" name="offset" defaultChecked={i === 0} className="m-0 h-3 w-3 appearance-none rounded-full border border-[#808080] bg-white checked:bg-[#222] checked:shadow-[inset_0_0_0_2px_#fff]" />
                {t}
              </label>
            ))}
            <span className="ml-[3px] mr-[2px] h-4 w-px bg-[#b5b5b5]" />
            <Spin label="X" />
            <span className="w-3" />
            <Spin label="Y" />
          </div>
          <div className="min-h-0 flex-1 overflow-hidden bg-black"><Drawing /></div>
          <div className="flex h-[27px] shrink-0 items-center bg-[#f0f0f0] pl-[2px]">
            <button className="h-6 w-[58px] border border-[#0078d7] bg-[#e1ecf6]">动态输入</button>
          </div>
        </div>
        <footer className="mt-[2px] flex h-[23px] shrink-0 gap-px">
          <span className="w-[100px] shrink-0 whitespace-nowrap border border-[#d9d9d9] bg-gradient-to-b from-white to-[#f0f0f0] leading-5">坐标 (X: 44 Y: 535)</span>
          <span className="flex flex-1 items-end justify-between border border-[#d9d9d9] bg-gradient-to-b from-white to-[#f0f0f0] leading-5">
            选择钢筋进行编辑，选择标注进行修改或移动;
            <svg width="12" height="12" aria-hidden="true"><path d="M8 1h2v2H8zM8 5h2v2H8zM4 5h2v2H4zM8 9h2v2H8zM4 9h2v2H4zM0 9h2v2H0z" fill="#bdbdbd" /></svg>
          </span>
        </footer>
      </div>
    </section>
  );
}

function GridField({ id, label, value, fieldRef }) {
  return (
    <fieldset className="border border-[#dcdcdc] px-[7px] pb-[6px] pt-[3px]">
      <legend className="pr-2 leading-[14px]"><label htmlFor={id}><Mono>{label}</Mono></label></legend>
      <textarea
        id={id}
        ref={fieldRef}
        defaultValue={value}
        className="block h-[41px] w-full resize-none border border-[#7a7a7a] bg-white px-[2px] pt-[2px] font-['DejaVu_Sans_Mono',monospace] text-[10px] leading-3 text-black outline-none selection:bg-[#0078d7] selection:text-white"
      />
    </fieldset>
  );
}

function GridDialog() {
  const first = useRef(null);
  useEffect(() => {
    first.current.focus();
    first.current.select();
  }, []);
  const btn = "h-6 w-[73px] border border-[#adadad] bg-[#e1e1e1]";
  return (
    <div role="dialog" aria-labelledby="grid-title" className="absolute left-[187px] top-[245px] w-[411px] border border-[#3c8ee0] bg-[#f0f0f0] shadow-[0_4px_14px_rgba(0,0,0,0.45)]">
      <div className="flex h-[25px] items-center justify-between bg-white pl-[3px] pr-[9px]">
        <h2 id="grid-title">定义网格</h2>
        <button aria-label="关闭对话框" className="flex"><svg width="12" height="12"><path d="M1 1l10 10M11 1L1 11" stroke="#111" strokeWidth="1.200" /></svg></button>
      </div>
      <div className="flex flex-col gap-2 px-[13px] pt-[15px]">
        <GridField id="gh" label="水平方向间距(mm)=>间距*个数,间距,间距*个数,间距,..." value="1100*1" fieldRef={first} />
        <GridField id="gv" label="垂直方向间距(mm)=>间距*个数,间距,间距*个数,间距,..." value="110*1" />
      </div>
      <div className="flex justify-end gap-[14px] pb-[7px] pr-[13px] pt-[12px]">
        <button className={btn}>确定</button>
        <button className={btn}>取消</button>
      </div>
    </div>
  );
}

function StatusBar() {
  const cell = "h-[19px] shrink-0 border border-[#d5d5d5] bg-gradient-to-b from-[#fafafa] to-[#f2f2f2] pl-px leading-[18px]";
  return (
    <footer className="flex h-[21px] shrink-0 items-center gap-[2px]">
      <span className={cell + " w-[148px]"} />
      <span className={cell + " w-[78px]"}><Mono>层高:2.8m</Mono></span>
      <span className={cell + " w-[98px]"}><Mono>底标高:20.35m</Mono></span>
      <span className={cell + " w-[48px]"}><Mono>0</Mono></span>
      <span className={cell + " flex-1"}>名称在当前层当前构件类型下不允许重名</span>
      <span className={cell + " w-[70px]"}><Mono>1123.9 FPS</Mono></span>
    </footer>
  );
}

function TaskIcon({ label, open, active, children }) {
  return (
    <button aria-label={label} className={"flex h-full shrink-0 flex-col items-center px-[3px] " + (open ? "w-12" : "w-[51px]")}>
      <span className={"flex w-full flex-1 items-center justify-center " + (active ? "bg-[#35464b]" : "")}>
        <svg width="24" height="24" viewBox="0 0 24 24">{children}</svg>
      </span>
      <span className={"h-[2px] w-full " + (open ? "bg-[#76b9ed]" : "")} />
    </button>
  );
}

function Taskbar() {
  return (
    <footer className="flex h-10 shrink-0 items-center bg-[#000a0d] text-white">
      <button aria-label="开始" className="flex h-full w-12 shrink-0 items-center justify-center bg-black">
        <svg width="16" height="16"><path d="M0 2.500l6.500-1v6H0zM7.500 1.300L16 0v7.500H7.500zM0 8.500h6.500v6l-6.500-1zM7.500 8.500H16V16l-8.500-1.300z" fill="#fff" /></svg>
      </button>
      <div className="flex h-full w-[342px] shrink-0 items-center bg-[#333] pl-2 pr-[12px]">
        <svg width="24" height="24" aria-hidden="true"><circle cx="12" cy="12" r="9" fill="none" stroke="#fff" strokeWidth="2.600" /></svg>
        <input aria-label="搜索" placeholder="在这里输入你要搜索的内容" className="ml-1 flex-1 bg-transparent text-[14px] outline-none placeholder:text-[#999]" />
        <svg width="16" height="18" aria-hidden="true"><rect x="5.500" y="1.500" width="5" height="10" rx="1" fill="none" stroke="#bbb" /><path d="M2.500 8v4q0 2 2 2h7q2 0 2-2V8M8 14v3" fill="none" stroke="#bbb" /></svg>
      </div>
      <TaskIcon label="任务视图"><path d="M6.500 5.500h11v13h-11zM4 7.500H2.500v9H4M20 7.500h1.500v9H20" fill="none" stroke="#fff" strokeWidth="1.300" /></TaskIcon>
      <TaskIcon label="四叶草">
        <g fill="#f2f2f2">
          <path d="M11.500 11.500Q8 13 4 11.500 1.500 10 2 6q1-4 5-4 3.500 0 4 3 .5 3-.5 4z" />
          <path d="M12.500 11.500Q11 8 12.500 4 14 1.500 18 2q4 1 4 5 0 3.500-3 4-3 .5-4-.5z" />
          <path d="M12.500 12.500Q16 11 20 12.500q2.500 1.500 2 5.500-1 4-5 4-3.500 0-4-3-.5-3 .5-4z" />
          <path d="M11.500 12.500Q13 16 11.500 20 10 22.500 6 22q-4-1-4-5 0-3.500 3-4 3-.5 4 .5z" />
        </g>
      </TaskIcon>
      <TaskIcon label="浏览器"><path d="M6 13h12.500q0-7-6.500-7t-6.500 7 6.500 6.500q4 0 6-3" fill="none" stroke="#f2f2f2" strokeWidth="3.600" /><path d="M15 3.500q6-3 6.500 0 0 2-1 4M5 12Q1 19 3.500 21.500q2 .5 4.500-1" fill="none" stroke="#f2f2f2" strokeWidth="1.600" /></TaskIcon>
      <TaskIcon label="螺旋"><path d="M19 4Q8 1 4.500 8T8 20t11-4-2.500-8-7.500 2 2 5.500 4.500-3H12M17 3q4 4 4 9t-5 9" fill="none" stroke="#ddd" strokeWidth="1.400" /></TaskIcon>
      <TaskIcon label="Edge"><path d="M2 11Q4 2 12 2q9 0 10 9v3H9q0 5 6 5 3 0 6-2v4q-3 1.500-7 1.500-9 0-9.500-8Q5 9 10 8q-5 0-8 3zM9 10h7q0-4-3.500-4T9 10z" fill="#0d7fdc" /></TaskIcon>
      <TaskIcon label="Internet Explorer"><path d="M5 13h14q0-8-7-8t-7 8 7 7q4.500 0 6.500-3.500" fill="none" stroke="#46b4ee" strokeWidth="4" /><path d="M3 22Q0 18 7 10T20 2q3 0 2 5" fill="none" stroke="#f5c52c" strokeWidth="2" /></TaskIcon>
      <TaskIcon label="资源管理器" open><path d="M2 3h8l2 3h10v15H2z" fill="#f4d071" /><path d="M2 9h20v12H2z" fill="#fce8a0" /><path d="M6 21v-6q0-2 2-2h8q2 0 2 2v6h-4v-4h-4v4z" fill="#3c9fe0" /></TaskIcon>
      <TaskIcon label="广联达" open>
        <path d="M17 7Q10 2.500 6 8t0 10 10 2 4-7h-7" fill="none" stroke="#25a5ee" strokeWidth="4" />
        <path d="M13 4q4-3 10-3-5 2-5 7z" fill="#25a5ee" />
      </TaskIcon>
      <TaskIcon label="钢筋算量" open active><rect x="1" y="1" width="22" height="22" rx="4" fill="#1590ee" /><path d="M13 5v12q-2 3-5.500 .5M4 12h16M7 9q-5 3 0 6M17 9q5 3 .5 6M13 5h3" stroke="#fff" strokeWidth="1.800" fill="none" /></TaskIcon>
      <TaskIcon label="记事" open><rect x="1" y="1" width="22" height="22" rx="2" fill="#f7a21b" /><path d="M4 5h14v15H4z" fill="#fff" /><path d="M6 8h9M6 11h6M6 14h4M6 17h8" stroke="#c06a20" /><path d="M21 3L12 14l-1 3 3-1.500L22 5z" fill="#8b3a10" /></TaskIcon>
      <TaskIcon label="安全浏览器" open><circle cx="12" cy="12" r="11" fill="#5bc236" /><path d="M7 13h10q1-6-5-6t-5 6 5 5q3 0 4.500-2M4 17Q10 4 21 6" fill="none" stroke="#fff" strokeWidth="2.300" /></TaskIcon>
      <span className="ml-[13px] shrink-0">链接</span>
      <span className="ml-4 w-[52px] shrink-0 text-center leading-[17px]">13%<br />CPU使用</span>
      <div className="ml-[15px] flex shrink-0 items-center gap-[9px]">
        <svg width="14" height="16" aria-label="显示隐藏的图标"><path d="M1 11l6-6 6 6" fill="none" stroke="#fff" strokeWidth="1.300" /></svg>
        <svg width="16" height="16" aria-label="电池"><path d="M4.500 4.500H14v7H4.500zM14.500 6.500h1v3h-1M1 2v3q0 2 2 2V2M2 7v5h2" fill="none" stroke="#fff" /><path d="M6 6h6.500v4H6z" fill="#fff" /></svg>
        <svg width="16" height="16" aria-label="网络"><path d="M4.500 2.500h11v8h-11zM10 11v3M6 14.500h8M1 3v4h3M2.500 7v8" fill="none" stroke="#fff" /></svg>
        <svg width="18" height="16" aria-label="音量"><path d="M1 6h2.500L7 3v10l-3.500-3H1z" fill="none" stroke="#fff" /><path d="M9.500 6q1.500 2 0 4M12 4q3 4 0 8M14.500 2q4 6 0 12" fill="none" stroke="#fff" /></svg>
        <svg width="24" height="14" aria-label="键盘"><path d="M.5 1.500h23v11H.5z" fill="none" stroke="#fff" /><path d="M3 4.500h18M3 7h18" stroke="#fff" strokeDasharray="1.500 1" /><path d="M3 10h3M7 10h10M18 10h3" stroke="#fff" /></svg>
        <span className="text-[13px]">英</span>
        <svg width="16" height="16" viewBox="0 0 28 28" className="ml-1" aria-label="搜狗"><SogouMark /></svg>
      </div>
      <time className="ml-[16px] w-[60px] shrink-0 text-center leading-[18px]">18:27<br />2018/5/22</time>
      <button aria-label="通知中心" className="ml-[16px] shrink-0">
        <svg width="26" height="26"><path d="M2 2h16v13H9l-3 3v-3H2z" fill="#fff" /><path d="M5 5.500h10M5 8.500h10M5 11.500h6" stroke="#000" /><circle cx="17" cy="17" r="8" fill="#2c2c2c" stroke="#8a8a8a" /><text x="14" y="22" fill="#fff" className="text-[12px] font-bold">1</text></svg>
      </button>
    </footer>
  );
}

function SogouMark() {
  return (
    <>
      <path d="M3 4L22 0q2 0 2.500 2L28 20q0 2-2 3L8 27q-2 0-2.500-2L0 7q0-2 3-3z" fill="#ee4a20" />
      <path d="M21 7.500Q9 5.500 8.500 10T19 14.500 18 20.500 6.500 19.500" fill="none" stroke="#fff" strokeWidth="3.400" />
    </>
  );
}

function ImeBar() {
  const c = "#1c78cf";
  return (
    <div className="absolute left-[836px] top-0 flex h-[27px] items-center">
      <svg width="28" height="27" viewBox="0 0 28 28" className="relative z-10" aria-label="搜狗输入法"><SogouMark /></svg>
      <div className="-ml-1 mt-[3px] flex h-6 w-[183px] items-center border border-[#a9bfdb] bg-white pl-[8px]">
        <b className="text-[15px] leading-5 text-[#1c78cf]">英</b>
        <svg width="146" height="18" className="ml-[6px]" aria-hidden="true" fill="none" stroke={c} strokeWidth="1.800">
          <circle cx="6" cy="7" r="1.600" fill={c} stroke="none" />
          <path d="M10.500 9.500q2 1 0 3.500" />
          <circle cx="31" cy="9" r="7" />
          <path d="M28.500 6v2.500M33.500 6v2.500M27 11q4 4.500 8 0" />
          <rect x="51" y="2" width="4" height="8" rx="2" fill={c} />
          <path d="M48 8q0 5 5 5t5-5M53 13v3.500M50 16.500h6" />
          <rect x="68" y="3.500" width="14" height="11" fill={c} />
          <path d="M69 6.500h12M69 9.500h12" stroke="#fff" strokeDasharray="1.500 1.500" />
          <path d="M71 12.500h8" stroke="#fff" strokeWidth="1.200" />
          <g fill="#b4c3dc" stroke="none"><circle cx="98" cy="5" r="3" /><path d="M92 14q0-5 6-5v6h-6zM98 9h11v7H98z" /></g>
          <path d="M100 12.500h2.500M104.500 12.500h2.500" stroke="#fff" />
          <path d="M113 5l4-2.500q2 1.500 5 0l4 2.500-1.500 3-1.500-.5V15h-7V7.500l-1.500.5z" fill={c} stroke="none" />
          <path d="M134 15l5.500-6q-1.500-5 3-6.500l.5 4 3 .5 1-3q2 6-5.500 7.500l-5 6z" fill={c} stroke="none" />
        </svg>
      </div>
    </div>
  );
}

export default function App() {
  return (
    <div className={"relative flex h-screen w-full flex-col overflow-hidden bg-[#f0f0f0] text-[12px] leading-4 text-black " + CJK}>
      <TitleBar />
      <MenuBar />
      <MainToolbar />
      <main className="flex min-h-0 flex-1">
        <NavPanel />
        <div className="ml-[6px] flex min-w-0 flex-1 flex-col pb-[2px]">
          <ComponentToolbar />
          <div className="flex min-h-0 flex-1">
            <ComponentList />
            <PropertyPane />
          </div>
        </div>
      </main>
      <StatusBar />
      <Taskbar />
      <ImeBar />
      <div className="absolute left-[1091px] top-[-30px] flex h-12 w-12 items-end justify-center rounded-full border-2 border-[#d9d9d9] bg-[#3fc456] pb-[2px] text-[12px] font-bold leading-3 text-white shadow-md">66</div>
      <SectionWindow />
      <GridDialog />
      <svg className="pointer-events-none absolute left-0 top-0 h-full w-full" aria-hidden="true">
        <g fill="none" stroke="#ff0000" strokeWidth="7">
          <ellipse cx="206" cy="249" rx="71" ry="24" />
          <ellipse cx="621" cy="182" rx="83" ry="36" />
        </g>
      </svg>
    </div>
  );
}
